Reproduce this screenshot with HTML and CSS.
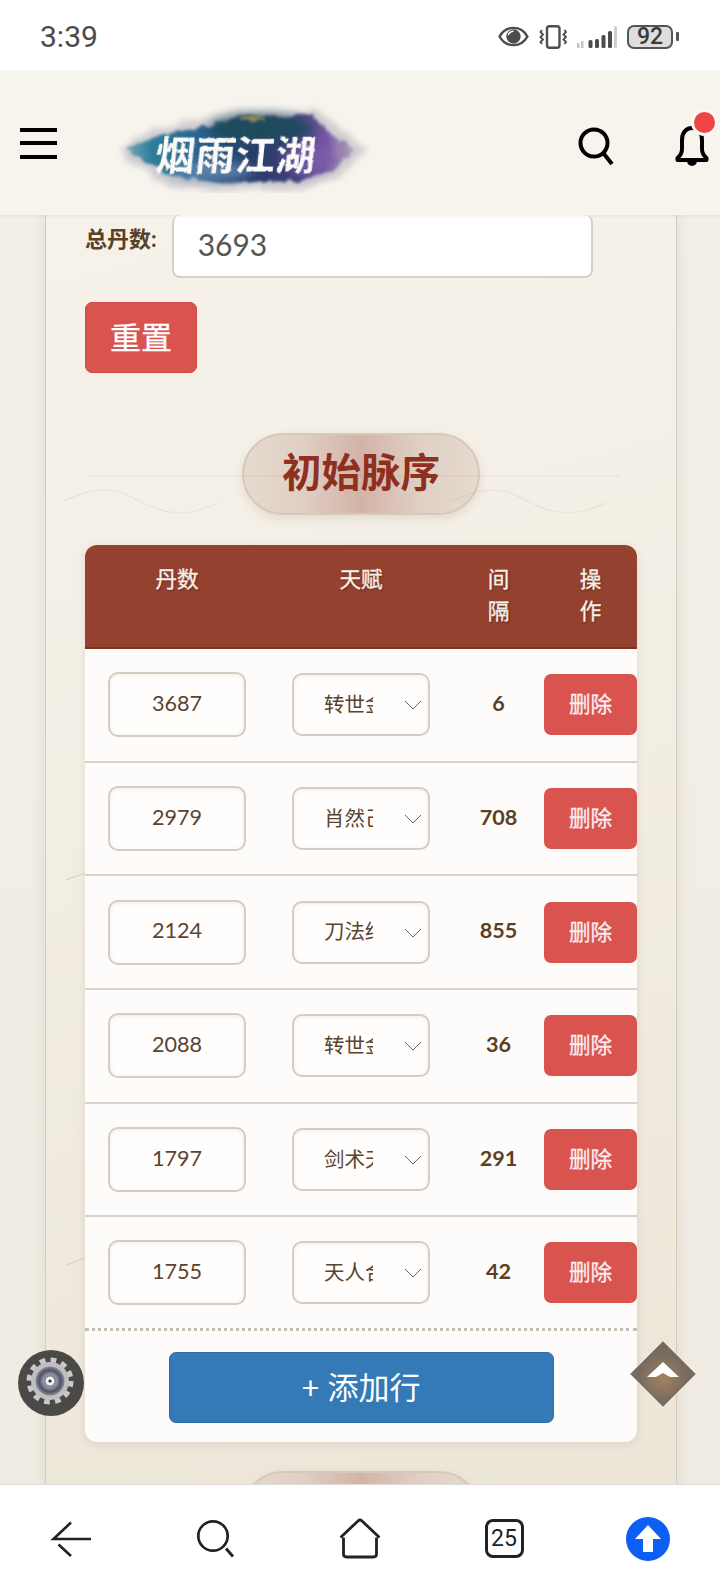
FILE: index.html
```html
<!DOCTYPE html>
<html lang="zh-CN">
<head>
<meta charset="utf-8">
<title>初始脉序</title>
<link rel="stylesheet" href="styles.css">
</head>
<body>
<div class="app">
  <div class="status">
    <span class="time">3:39</span>
    <div class="status-icons">
      <svg class="ic-eye" viewBox="0 0 32 24"><path d="M1.500 12C5 5.500 10 3 16 3s11 2.500 14.500 9C27 18.500 22 21 16 21S5 18.500 1.500 12z" fill="none" stroke="#4d4d4d" stroke-width="2.600"/><circle cx="16" cy="12" r="7.500" fill="#4d4d4d"/><path d="M10.500 10.500A6 6 0 0 1 16 6.500" fill="none" stroke="#fff" stroke-width="1.500"/></svg>
      <svg class="ic-vib" viewBox="0 0 28 24"><rect x="8" y="1.200" width="12.500" height="21.600" rx="2.500" fill="none" stroke="#4d4d4d" stroke-width="2.400"/><path d="M3 5l-1.500 2 2.500 2.500-2.500 2.500 2.500 2.500-2.500 2.500 1.500 2M25.500 5l1.500 2-2.500 2.500 2.500 2.500-2.500 2.500 2.500 2.500-1.500 2" fill="none" stroke="#4d4d4d" stroke-width="1.900"/></svg>
      <svg class="ic-sig" viewBox="0 0 40 24"><path d="M0 18h2.500v5H0zM4 16h2.500v7H4z" fill="#c4c4c4"/><rect x="11.500" y="15" width="4" height="8" rx="1.500" fill="#4d4d4d"/><rect x="18" y="14" width="4" height="9" rx="1.500" fill="#4d4d4d"/><rect x="24.500" y="10" width="4" height="13" rx="1.500" fill="#4d4d4d"/><rect x="31" y="6" width="4" height="17" rx="1.500" fill="#4d4d4d"/><rect x="37" y="1" width="3" height="22" rx="1.500" fill="#cfcfcf"/></svg>
      <div class="battery">92</div>
    </div>
  </div>

  <header class="topbar">
    <div class="burger"><i></i><i></i><i></i></div>
    <svg class="logo" viewBox="0 0 260 100">
      <defs>
        <linearGradient id="ink" x1="0" y1="0" x2="1" y2="0">
          <stop offset="0" stop-color="#7fa6b4"/>
          <stop offset=".1" stop-color="#2e7f9b"/>
          <stop offset=".3" stop-color="#2c6690"/>
          <stop offset=".55" stop-color="#263c69"/>
          <stop offset=".72" stop-color="#3c3f78"/>
          <stop offset=".87" stop-color="#7656a4"/>
          <stop offset="1" stop-color="#b3a6bd"/>
        </linearGradient>
        <filter id="rough" x="-10%" y="-20%" width="120%" height="140%">
          <feTurbulence type="fractalNoise" baseFrequency=".1" numOctaves="3" seed="4"/>
          <feDisplacementMap in="SourceGraphic" scale="9" xChannelSelector="R" yChannelSelector="G"/>
          <feGaussianBlur stdDeviation="1.600"/>
        </filter>
        <filter id="soft" x="-10%" y="-30%" width="120%" height="160%">
          <feTurbulence type="fractalNoise" baseFrequency=".08" numOctaves="3" seed="9"/>
          <feDisplacementMap in="SourceGraphic" scale="10" xChannelSelector="R" yChannelSelector="G"/>
          <feGaussianBlur stdDeviation="3"/>
        </filter>
        <filter id="blob" x="-30%" y="-50%" width="160%" height="200%">
          <feGaussianBlur stdDeviation="6"/>
        </filter>
        <filter id="brush" x="-5%" y="-10%" width="110%" height="120%">
          <feTurbulence type="fractalNoise" baseFrequency=".25" numOctaves="2" seed="2"/>
          <feDisplacementMap in="SourceGraphic" scale="2.500" xChannelSelector="R" yChannelSelector="G"/>
        </filter>
      </defs>
      <path d="M6 57L28 44 45 36 98 24 131 17 203 16 226 33 254 57 228 84 190 96 108 98 52 91 28 74z" fill="#cfcdd0" filter="url(#soft)"/>
      <path d="M15 57L42 44 98 32 131 23 200 22 219 40 242 57 220 78 188 88 108 90 56 82 32 69z" fill="url(#ink)" filter="url(#rough)"/>
      <ellipse cx="150" cy="36" rx="52" ry="13" fill="#1f4c5c" filter="url(#blob)"/>
      <ellipse cx="100" cy="78" rx="42" ry="8" fill="#6b8db4" opacity=".85" filter="url(#blob)"/>
      <ellipse cx="196" cy="66" rx="24" ry="14" fill="#7d5bab" opacity=".8" filter="url(#blob)"/>
      <path d="M128 25l20-3 8 4-24 3z" fill="#a99a5c" opacity=".8" filter="url(#rough)"/>
      <text class="logo-text" x="42" y="77" filter="url(#brush)">烟雨江湖</text>
    </svg>
    <div class="top-actions">
      <svg class="ic-search" viewBox="0 0 44 100"><circle cx="19" cy="50" r="13.500" fill="none" stroke="#000" stroke-width="4"/><path d="M29 61l8 10" stroke="#000" stroke-width="4" fill="none"/></svg>
      <div class="bell">
        <svg class="ic-bell" viewBox="0 0 44 100"><path d="M21 35c-6.500 0-10 5.500-10 12v9c0 4.500-2 7-4.500 9v2h29v-2c-2.500-2-4.500-4.500-4.500-9v-9c0-6.500-3.500-12-10-12z" fill="none" stroke="#000" stroke-width="4" stroke-linejoin="round"/><path d="M16 68a5 5 0 0 0 10 0z" fill="#000"/></svg>
        <span class="dot"></span>
      </div>
    </div>
  </header>

  <main class="scroll">
    <section class="card">
      <svg class="fleck fleck-a" viewBox="0 0 20 8"><path d="M0 7L19 0" stroke="#b9ad9a" stroke-opacity=".5" fill="none"/></svg>
      <svg class="fleck fleck-b" viewBox="0 0 20 8"><path d="M0 7L19 0" stroke="#b9ad9a" stroke-opacity=".5" fill="none"/></svg>

      <div class="total">
        <label class="total-label" for="total">总丹数:</label>
        <input class="total-input" id="total" value="3693">
      </div>
      <button class="btn-reset">重置</button>

      <div class="title-wrap">
        <h2 class="pill">初始脉序</h2>
        <svg class="waves" viewBox="0 0 560 40"><path d="M23 1h533" stroke="#8a6b55" stroke-opacity=".1" fill="none"/><path d="M0 26c14-6 28-12 44-11 26 2 40 22 70 23 18 0 30-6 40-10M388 26c14-6 28-12 44-11 26 2 40 22 70 23 18 0 30-6 40-10" stroke="#b7a995" stroke-opacity=".2" fill="none" stroke-width="1.200"/></svg>
      </div>

      <div class="table">
        <div class="row head">
          <div class="th">丹数</div>
          <div class="th">天赋</div>
          <div class="th narrow">间隔</div>
          <div class="th narrow">操作</div>
        </div>

        <div class="row">
          <div class="td"><input class="num" value="3687"></div>
          <div class="td"><div class="sel"><select class="talent"><option>转世金丹</option></select><svg class="chev" viewBox="0 0 18 10"><path d="M1 1l8 8 8-8" fill="none" stroke="#666" stroke-width="1"/></svg></div></div>
          <div class="td gap">6</div>
          <div class="td"><button class="btn-del">删除</button></div>
        </div>
        <div class="row">
          <div class="td"><input class="num" value="2979"></div>
          <div class="td"><div class="sel"><select class="talent"><option>肖然己任</option></select><svg class="chev" viewBox="0 0 18 10"><path d="M1 1l8 8 8-8" fill="none" stroke="#666" stroke-width="1"/></svg></div></div>
          <div class="td gap">708</div>
          <div class="td"><button class="btn-del">删除</button></div>
        </div>
        <div class="row">
          <div class="td"><input class="num" value="2124"></div>
          <div class="td"><div class="sel"><select class="talent"><option>刀法结晶</option></select><svg class="chev" viewBox="0 0 18 10"><path d="M1 1l8 8 8-8" fill="none" stroke="#666" stroke-width="1"/></svg></div></div>
          <div class="td gap">855</div>
          <div class="td"><button class="btn-del">删除</button></div>
        </div>
        <div class="row">
          <div class="td"><input class="num" value="2088"></div>
          <div class="td"><div class="sel"><select class="talent"><option>转世金丹</option></select><svg class="chev" viewBox="0 0 18 10"><path d="M1 1l8 8 8-8" fill="none" stroke="#666" stroke-width="1"/></svg></div></div>
          <div class="td gap">36</div>
          <div class="td"><button class="btn-del">删除</button></div>
        </div>
        <div class="row">
          <div class="td"><input class="num" value="1797"></div>
          <div class="td"><div class="sel"><select class="talent"><option>剑术天成</option></select><svg class="chev" viewBox="0 0 18 10"><path d="M1 1l8 8 8-8" fill="none" stroke="#666" stroke-width="1"/></svg></div></div>
          <div class="td gap">291</div>
          <div class="td"><button class="btn-del">删除</button></div>
        </div>
        <div class="row last">
          <div class="td"><input class="num" value="1755"></div>
          <div class="td"><div class="sel"><select class="talent"><option>天人合一</option></select><svg class="chev" viewBox="0 0 18 10"><path d="M1 1l8 8 8-8" fill="none" stroke="#666" stroke-width="1"/></svg></div></div>
          <div class="td gap">42</div>
          <div class="td"><button class="btn-del">删除</button></div>
        </div>

        <div class="add-wrap"><button class="btn-add">+ 添加行</button></div>
      </div>

      <div class="title-wrap next">
        <h2 class="pill">&nbsp;</h2>
      </div>
    </section>

    <svg class="float-gear" viewBox="0 0 66 66">
      <defs>
        <radialGradient id="disc" cx=".5" cy=".5" r=".5">
          <stop offset="0" stop-color="#e8e8ec"/>
          <stop offset=".2" stop-color="#5c5e6e"/>
          <stop offset=".45" stop-color="#9497a8"/>
          <stop offset=".75" stop-color="#4f5262"/>
          <stop offset="1" stop-color="#8b8d98"/>
        </radialGradient>
      </defs>
      <circle cx="33" cy="33" r="33" fill="#4b4947"/>
      <circle cx="32" cy="31" r="20.500" fill="none" stroke="#c9c9c9" stroke-width="6" stroke-dasharray="5.600 5.130"/>
      <circle cx="32" cy="31" r="19" fill="#bfbfc1"/>
      <circle cx="32" cy="31" r="14.500" fill="url(#disc)"/>
      <circle cx="32" cy="31" r="4.500" fill="#f2f2f2"/>
      <circle cx="32" cy="31" r="1.600" fill="#2c2c30"/>
    </svg>
    <svg class="float-top" viewBox="0 0 70 70">
      <defs>
        <radialGradient id="glow" cx=".5" cy=".56" r=".36">
          <stop offset="0" stop-color="#a5825f"/>
          <stop offset="1" stop-color="#776b5f"/>
        </radialGradient>
      </defs>
      <path d="M35 2l33 33-33 33L2 35z" fill="url(#glow)" stroke="#e9dfd0" stroke-opacity=".6"/>
      <path d="M19 38l16-15 16 15h-9l-7-4-7 4z" fill="#fff"/>
    </svg>
  </main>

  <nav class="bottom">
    <div class="nav-item"><svg class="nav-ic" viewBox="0 0 44 44"><path d="M21 5.500L3.500 22H41M8.500 27.500L21 39" fill="none" stroke="#222" stroke-width="2.600"/></svg></div>
    <div class="nav-item"><svg class="nav-ic" viewBox="0 0 44 44"><circle cx="19" cy="19" r="14.700" fill="none" stroke="#222" stroke-width="2.700"/><path d="M32 31.500l7 8" stroke="#222" stroke-width="2.800" fill="none"/></svg></div>
    <div class="nav-item"><svg class="nav-ic" viewBox="0 0 44 44"><path d="M2.500 20.500L20 4q2-2 4 0L41.500 20.500M5.500 20.500V37q0 3 3 3h27q3 0 3-3V20.500" fill="none" stroke="#222" stroke-width="2.800" stroke-linejoin="round"/></svg></div>
    <div class="nav-item"><div class="tabs">25</div></div>
    <div class="nav-item"><svg class="nav-up" viewBox="0 0 44 44"><circle cx="22" cy="22" r="22" fill="#0d5ef4"/><path d="M22 8L9 22h8v13h10V22h8z" fill="#fff"/></svg></div>
  </nav>
</div>
</body>
</html>
```

FILE: styles.css
```css
* { box-sizing: border-box; }

html, body {
  margin: 0;
  padding: 0;
  background: #fff;
}

body {
  font-family: Lato, "Noto Sans CJK SC", sans-serif;
  color: #5c4330;
}

.app {
  width: 720px;
  height: 1592px;
  display: flex;
  flex-direction: column;
  overflow: hidden;
  position: relative;
}

/* status bar */
.status {
  flex: 0 0 71px;
  background: #fff;
  display: flex;
  align-items: center;
  justify-content: space-between;
  padding: 2px 43px 0 40px;
}

.time {
  font-family: Roboto, sans-serif;
  font-size: 30px;
  color: #4a4a4a;
}

.status-icons {
  display: flex;
  align-items: center;
  gap: 10px;
}

.ic-eye { width: 31px; height: 23px; }
.ic-vib { width: 28px; height: 24px; }
.ic-sig { width: 40px; height: 24px; }

.battery {
  position: relative;
  width: 46px;
  height: 24px;
  margin-right: 4px;
  border: 2.5px solid #555;
  border-radius: 7px;
  background: #dedede;
  font-family: Roboto, sans-serif;
  font-weight: 500;
  font-size: 23px;
  line-height: 19px;
  text-align: center;
  color: #3a3a3a;
}

.battery::after {
  content: "";
  position: absolute;
  right: -8px;
  top: 5px;
  width: 3px;
  height: 9px;
  border-radius: 1px;
  background: #555;
}

/* top bar */
.topbar {
  flex: 0 0 144px;
  background: #f7f4ed;
  display: flex;
  align-items: center;
  padding: 0 5px 0 20px;
  position: relative;
  z-index: 2;
  box-shadow: 0 1px 3px rgba(120, 100, 80, .12);
}

.burger {
  width: 37px;
  display: flex;
  flex-direction: column;
  gap: 9.5px;
}

.burger i {
  display: block;
  height: 4px;
  background: #000;
}

.logo {
  width: 260px;
  height: 100px;
  margin-left: 55px;
}

.logo-text {
  font-family: "Noto Sans CJK SC", sans-serif;
  font-weight: 700;
  font-size: 40px;
  fill: #fbfaf8;
  transform: skewX(-6deg);
  transform-origin: 42px 77px;
}

.top-actions {
  margin-left: auto;
  display: flex;
  align-items: center;
  gap: 52px;
}

.ic-search { width: 44px; height: 100px; }

.bell { position: relative; width: 44px; height: 100px; }
.ic-bell { width: 44px; height: 100px; display: block; }

.dot {
  position: absolute;
  left: 20px;
  top: 16px;
  width: 27px;
  height: 27px;
  border-radius: 50%;
  background: #ef4444;
  border: 3.5px solid #fbf9f5;
}

/* scrolling content */
.scroll {
  flex: 1 1 auto;
  min-height: 0;
  overflow: hidden;
  padding-left: 45px;
  position: relative;
  background: linear-gradient(180deg, #f2efe8 0%, #f0ece3 100%);
}

.card {
  position: relative;
  width: 632px;
  padding: 0 39px;
  border-left: 1.5px solid #d3cbbb;
  border-right: 1.5px solid #d3cbbb;
  background: linear-gradient(165deg, #f6f2ea 0%, #f3eee4 40%, #ebe4d6 100%);
  box-shadow: 0 0 14px rgba(110, 90, 60, .12);
  min-height: 1400px;
}

.fleck {
  position: absolute;
  left: 20px;
  width: 20px;
  height: 8px;
}

.fleck-a { top: 658px; }
.fleck-b { top: 1043px; }

.total {
  display: flex;
  align-items: flex-start;
  gap: 15px;
}

.total-label {
  font-size: 22px;
  font-weight: 700;
  line-height: 30px;
  padding-top: 9px;
  color: #5c3f28;
}

.total-input {
  width: 421px;
  height: 63px;
  padding: 0 24px 4px;
  border: 2px solid #d4d0ca;
  border-top: 0;
  border-radius: 8px;
  background: #fff;
  font-family: Lato, sans-serif;
  font-size: 30px;
  color: #555;
  outline: 0;
}

.btn-reset {
  display: block;
  width: 112px;
  height: 71px;
  margin-top: 24px;
  border: 1px solid #d04a46;
  border-radius: 7px;
  background: #d9534f;
  color: #fff;
  font-family: inherit;
  font-size: 31px;
  padding: 0 0 5px;
  -webkit-text-stroke: .3px #fff;
}

.title-wrap {
  position: relative;
  display: flex;
  justify-content: center;
  margin-top: 60px;
}

.pill {
  width: 238px;
  height: 82px;
  margin: 0;
  border: 2px solid #d6c8ba;
  border-radius: 41px;
  background: linear-gradient(90deg, #e6dace 0%, #e0cfc4 25%, #d3b3a7 50%, #e0cfc4 75%, #e6dace 100%);
  box-shadow: 0 4px 10px rgba(120, 90, 60, .14);
  font-size: 39.5px;
  font-weight: 700;
  line-height: 74px;
  text-align: center;
  color: #8f2f1f;
}

.waves {
  position: absolute;
  left: -21px;
  top: 42px;
  width: 560px;
  height: 40px;
  pointer-events: none;
}

/* table */
.table {
  margin-top: 30px;
  width: 552px;
  border-radius: 12px;
  background: #fefcfa;
  box-shadow: 0 2px 8px rgba(120, 100, 70, .14);
  overflow: hidden;
}

.row {
  display: grid;
  grid-template-columns: 184px 184px 91px 93px;
  height: 113.7px;
  border-bottom: 2px solid #d8d2c7;
}

.row.last {
  height: 114px;
  border-bottom: 3px dotted #c6beb1;
}

.row.head {
  height: 104px;
  background: #94412f;
  border-bottom: 2px solid #8a2d1c;
}

.th {
  padding-top: 18px;
  font-size: 21.6px;
  line-height: 32px;
  text-align: center;
  color: #f7efe6;
  -webkit-text-stroke: .35px #f7efe6;
  text-shadow: 1px 1px 2px rgba(60, 20, 10, .55);
}

.th.narrow { padding-left: 33px; padding-right: 33px; }

.td {
  display: flex;
  align-items: center;
  justify-content: center;
}

.num {
  width: 138px;
  height: 65px;
  border: 2px solid #d4cdc1;
  border-radius: 10px;
  background: #fffefc;
  box-shadow: inset 0 1px 4px rgba(120, 100, 80, .12);
  font-family: Lato, sans-serif;
  font-size: 21.6px;
  text-align: center;
  color: #5c4330;
  outline: 0;
  padding: 0 0 4px;
}

.sel {
  position: relative;
  width: 138px;
  height: 63px;
}

.talent {
  appearance: none;
  -webkit-appearance: none;
  width: 100%;
  height: 100%;
  padding: 0 55px 4px 30px;
  border: 2px solid #d4cdc1;
  border-radius: 10px;
  background: #fffefc;
  box-shadow: inset 0 1px 4px rgba(120, 100, 80, .1);
  font-family: "Noto Sans CJK SC", sans-serif;
  font-size: 20.5px;
  color: #5c4330;
  outline: 0;
}

.chev {
  position: absolute;
  right: 8px;
  top: 27px;
  width: 18px;
  height: 10px;
}

.gap {
  font-size: 21.6px;
  font-weight: 700;
  color: #5c3f28;
  padding-bottom: 4px;
}

.btn-del {
  width: 93px;
  height: 61px;
  border: 0;
  border-radius: 7px;
  background: #d9534f;
  color: #fbeeee;
  font-family: inherit;
  font-size: 21.6px;
  padding: 0 0 4px;
  -webkit-text-stroke: .3px #fbeeee;
}

.add-wrap {
  display: flex;
  justify-content: center;
  padding: 21px 0 19px;
}

.btn-add {
  width: 385px;
  height: 71px;
  border: 1px solid #2e6da4;
  border-radius: 7px;
  background: #337ab7;
  color: #fff;
  font-family: inherit;
  font-size: 31px;
  padding: 0 0 5px;
}

.next { margin-top: 29px; }

/* floating buttons */
.float-gear {
  position: absolute;
  left: 18px;
  top: 1135px;
  width: 66px;
  height: 66px;
}

.float-top {
  position: absolute;
  left: 628px;
  top: 1124px;
  width: 70px;
  height: 70px;
}

/* bottom navigation */
.bottom {
  flex: 0 0 108px;
  background: #fff;
  border-top: 1px solid #dedbd6;
  display: grid;
  grid-template-columns: repeat(5, 144px);
  align-items: center;
  justify-items: center;
  position: relative;
  z-index: 2;
}

.nav-item { display: flex; }

.nav-ic { width: 44px; height: 44px; }
.nav-up { width: 44px; height: 44px; }

.tabs {
  width: 39px;
  height: 39px;
  border: 3px solid #222;
  border-radius: 8px;
  font-family: Roboto, sans-serif;
  font-size: 23px;
  line-height: 33px;
  text-align: center;
  color: #222;
}
```
